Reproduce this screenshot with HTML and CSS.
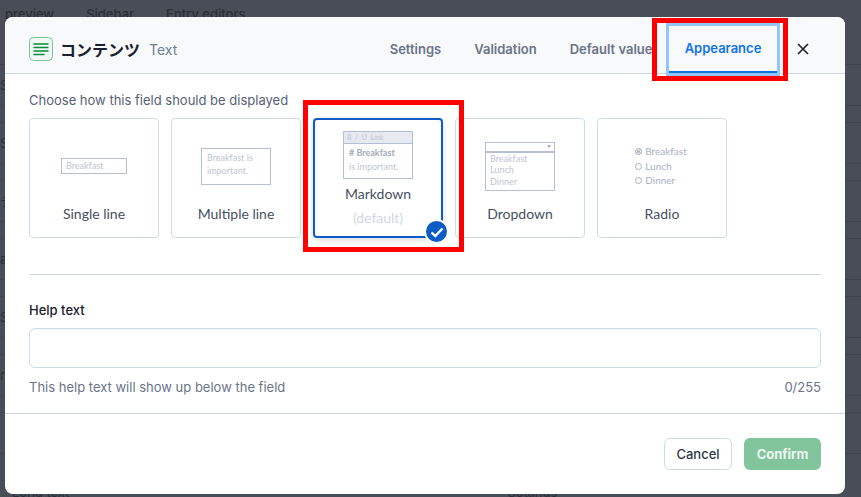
FILE: index.html
```html
<!DOCTYPE html>
<html lang="en">

<head>
    <meta charset="UTF-8">
    <title>Field appearance</title>
    <link rel="stylesheet" href="styles.css">
</head>

<body>
    <div class="page">
        <div class="page-tabs"><span>preview</span><span>Sidebar</span><span>Entry editors</span></div>
        <div class="page-rows">
            <div class="page-row">S</div>
            <div class="page-row">S</div>
            <div class="page-row">テ</div>
            <div class="page-row">a</div>
            <div class="page-row">S</div>
            <div class="page-row">r</div>
            <div class="page-row"></div>
        </div>
        <div class="page-foot"><span>Long text</span><span>Settings</span></div>
    </div>

    <div class="modal">
        <header class="modal-head">
            <div class="title">
                <span class="title-icon">
                    <svg width="24" height="24" viewBox="0 0 24 24">
                        <rect x="0.500" y="0.500" width="23" height="23" rx="4" fill="#eff8f3" stroke="#7cc29a"></rect>
                        <path d="M4.500 7h15M4.500 10.500h15M4.500 14h15M4.500 17.500h11" stroke="#0a8a3e" stroke-width="1.400" fill="none"></path>
                    </svg>
                </span>
                <h1>コンテンツ</h1>
                <span class="title-type">Text</span>
            </div>
            <nav class="tabs">
                <span class="tab">Settings</span>
                <span class="tab">Validation</span>
                <span class="tab">Default value</span>
                <span class="tab tab-active">Appearance</span>
            </nav>
            <svg class="close" width="12" height="12" viewBox="0 0 12 12">
                <path d="M1 1l10 10M11 1L1 11" stroke="#1a202c" stroke-width="1.600" fill="none"></path>
            </svg>
        </header>

        <div class="modal-body">
            <p class="hint">Choose how this field should be displayed</p>
            <div class="options">
                <div class="option">
                    <div class="preview">
                        <div class="mini mini-single">Breakfast</div>
                    </div>
                    <div class="option-name">Single line</div>
                </div>
                <div class="option">
                    <div class="preview">
                        <div class="mini mini-multi">Breakfast is<br>important.</div>
                    </div>
                    <div class="option-name">Multiple line</div>
                </div>
                <div class="option option-selected">
                    <div class="mini mini-md">
                        <div class="md-bar">B &nbsp;/ &nbsp;U &nbsp;Link</div>
                        <div class="md-text"><b># Breakfast</b><br>is important.</div>
                    </div>
                    <div class="option-name md-name">Markdown</div>
                    <div class="option-default">(default)</div>
                    <span class="check">
                        <svg width="18" height="18" viewBox="0 0 18 18">
                            <path d="M3.500 9.500l3.800 3.600L14.500 5.500" stroke="#fff" stroke-width="2.400" fill="none"></path>
                        </svg>
                    </span>
                </div>
                <div class="option">
                    <div class="preview">
                        <div class="mini mini-drop">
                            <div class="drop-top">
                                <svg width="4" height="3" viewBox="0 0 4 3"><path d="M0 0h4L2 3z" fill="#a3acc4"></path></svg>
                            </div>
                            <div class="drop-list">Breakfast<br>Lunch<br>Dinner</div>
                        </div>
                    </div>
                    <div class="option-name">Dropdown</div>
                </div>
                <div class="option">
                    <div class="preview">
                        <div class="mini-radio">
                            <div class="radio-row"><i class="dot dot-on"></i>Breakfast</div>
                            <div class="radio-row"><i class="dot"></i>Lunch</div>
                            <div class="radio-row"><i class="dot"></i>Dinner</div>
                        </div>
                    </div>
                    <div class="option-name">Radio</div>
                </div>
            </div>

            <hr class="divider">

            <label class="help-label" for="help">Help text</label>
            <input class="help-input" id="help" type="text">
            <div class="help-foot">
                <span>This help text will show up below the field</span>
                <span>0/255</span>
            </div>
        </div>

        <footer class="modal-foot">
            <button class="btn btn-cancel">Cancel</button>
            <button class="btn btn-confirm">Confirm</button>
        </footer>
    </div>

    <div class="mark mark-tab"></div>
    <div class="mark mark-option"></div>
</body>

</html>
```

FILE: styles.css
```css
* {
    margin: 0;
    padding: 0;
    box-sizing: border-box;
}

body {
    width: 861px;
    height: 497px;
    overflow: hidden;
    position: relative;
    background-color: #494d57;
    font-family: Inter, "Noto Sans CJK JP", sans-serif;
    font-size: 13px;
    color: #2d3748;
}

/* page dimmed behind the modal */
.page {
    height: 497px;
    color: #2b2e36;
    display: flex;
    flex-direction: column;
}

.page-tabs {
    height: 24px;
    padding: 6px 0 0 5px;
    display: flex;
    gap: 32px;
    font-weight: 500;
}

.page-rows {
    flex: 1;
    padding-top: 40px;
    overflow: hidden;
}

.page-row {
    height: 42px;
    line-height: 40px;
    margin-bottom: 16px;
    border-top: 1px solid #40444d;
    border-bottom: 1px solid #40444d;
}

.page-foot {
    display: flex;
    gap: 438px;
    padding-left: 12px;
    height: 10px;
    line-height: 10px;
}

/* modal */
.modal {
    position: absolute;
    left: 5px;
    top: 17px;
    width: 840px;
    height: 477px;
    background-color: #fff;
    border-radius: 8px;
    overflow: hidden;
    display: flex;
    flex-direction: column;
}

.modal-head {
    height: 57px;
    padding: 8px 36px 0 24px;
    background-color: #f7f9fb;
    border-bottom: 1px solid #cfd8e0;
    display: flex;
    align-items: center;
}

.title {
    display: flex;
    align-items: center;
}

.title-icon {
    width: 24px;
    height: 24px;
    margin-right: 7px;
}

.title h1 {
    font-size: 16px;
    font-weight: 700;
    color: #1a202c;
}

.title-type {
    margin-left: 9px;
    font-size: 14px;
    color: #718096;
}

.tabs {
    margin-left: auto;
    margin-right: 20px;
    align-self: stretch;
    display: flex;
}

.tab {
    padding: 0 16.500px;
    line-height: 48px;
    font-size: 13px;
    font-weight: 600;
    color: #6b7489;
}

.tab-active {
    width: 108px;
    height: 47px;
    margin: 1px 0 0 0;
    padding: 0;
    text-align: center;
    line-height: 45px;
    color: #0f73e6;
    border-bottom: 2px solid #0f73e6;
    outline: 3px solid #93c5fd;
}

.close {
    flex: none;
}

.modal-body {
    flex: 1;
    padding: 17px 24px 0;
}

.hint {
    line-height: 18px;
    color: #566178;
}

.options {
    margin-top: 9px;
    display: flex;
    gap: 12px;
}

.option {
    width: 130px;
    height: 120px;
    border: 1px solid #cfdbe4;
    border-radius: 4px;
    display: flex;
    flex-direction: column;
    align-items: center;
    position: relative;
    font-family: Lato, sans-serif;
}

.preview {
    height: 74px;
    margin-top: 10px;
    display: flex;
    align-items: center;
    justify-content: center;
}

.option-name {
    font-size: 14px;
    line-height: 18px;
    margin-top: 2px;
    color: #465064;
}

.mini {
    border: 1px solid #b5bed2;
    font-size: 9px;
    color: #bfc5d2;
}

.mini-single {
    width: 66px;
    height: 16px;
    line-height: 14px;
    padding-left: 4px;
}

.mini-multi {
    width: 70px;
    height: 37px;
    padding: 2px 5px;
    line-height: 13.500px;
}

.mini-md {
    width: 70px;
    height: 48px;
    margin-top: 11px;
}

.md-bar {
    height: 12px;
    line-height: 11px;
    padding-left: 3px;
    font-size: 7px;
    background-color: #e6e9ef;
    border-bottom: 1px solid #b5bed2;
}

.md-text {
    padding: 2px 5px;
    line-height: 14px;
}

.md-text b {
    font-weight: 700;
    color: #a4abb9;
}

.option-selected {
    border: 2px solid #0b5cc4;
    box-shadow: 0 2px 6px rgba(0, 0, 0, .15);
}

.md-name {
    margin-top: 6px;
}

.option-default {
    margin-top: 6px;
    font-size: 14px;
    line-height: 18px;
    color: #cfd8e3;
}

.check {
    position: absolute;
    right: -8px;
    bottom: -8px;
    width: 25px;
    height: 25px;
    border-radius: 50%;
    background-color: #0b5cc4;
    border: 2px solid #fff;
    display: flex;
    align-items: center;
    justify-content: center;
}

.mini-drop {
    width: 70px;
    height: 49px;
}

.drop-top {
    height: 10px;
    border-bottom: 2px solid #b5bed2;
    display: flex;
    justify-content: flex-end;
    align-items: center;
    padding-right: 3px;
}

.drop-list {
    padding: 0 4px;
    line-height: 11.500px;
}

.mini-radio {
    margin-right: 2px;
    font-size: 10px;
    line-height: 14.500px;
    color: #a9afbf;
}

.radio-row {
    display: flex;
    align-items: center;
    gap: 3px;
}

.dot {
    width: 7px;
    height: 7px;
    border: 1px solid #a9afbf;
    border-radius: 50%;
}

.dot-on {
    background-color: #a9afbf;
    box-shadow: inset 0 0 0 1px #fff;
}

.divider {
    margin-top: 36px;
    border: 0;
    border-top: 1px solid #cfdbe4;
}

.help-label {
    display: block;
    margin-top: 26px;
    font-weight: 500;
    line-height: 18px;
    color: #1a202c;
}

.help-input {
    display: block;
    width: 100%;
    height: 40px;
    margin-top: 9px;
    border: 1px solid #cfdbe4;
    border-radius: 6px;
    box-shadow: inset 0 1px 2px rgba(0, 0, 0, .04);
}

.help-foot {
    margin-top: 10px;
    display: flex;
    justify-content: space-between;
    line-height: 18px;
    color: #6a7488;
}

.modal-foot {
    height: 81px;
    padding: 0 24px;
    border-top: 1px solid #cfdbe4;
    display: flex;
    align-items: center;
    justify-content: flex-end;
    gap: 12px;
}

.btn {
    height: 32px;
    border-radius: 6px;
    font-family: inherit;
    font-size: 13px;
}

.btn-cancel {
    width: 68px;
    font-weight: 500;
    background-color: #fff;
    border: 1px solid #cfdbe4;
    color: #2d3748;
}

.btn-confirm {
    width: 77px;
    font-weight: 700;
    background-color: #82c49c;
    border: 0;
    color: #eef7f1;
}

/* red annotation boxes */
.mark {
    position: absolute;
    border: 5px solid #f00;
}

.mark-tab {
    left: 652px;
    top: 18px;
    width: 136px;
    height: 63px;
}

.mark-option {
    left: 303px;
    top: 100px;
    width: 161px;
    height: 152px;
}
```
